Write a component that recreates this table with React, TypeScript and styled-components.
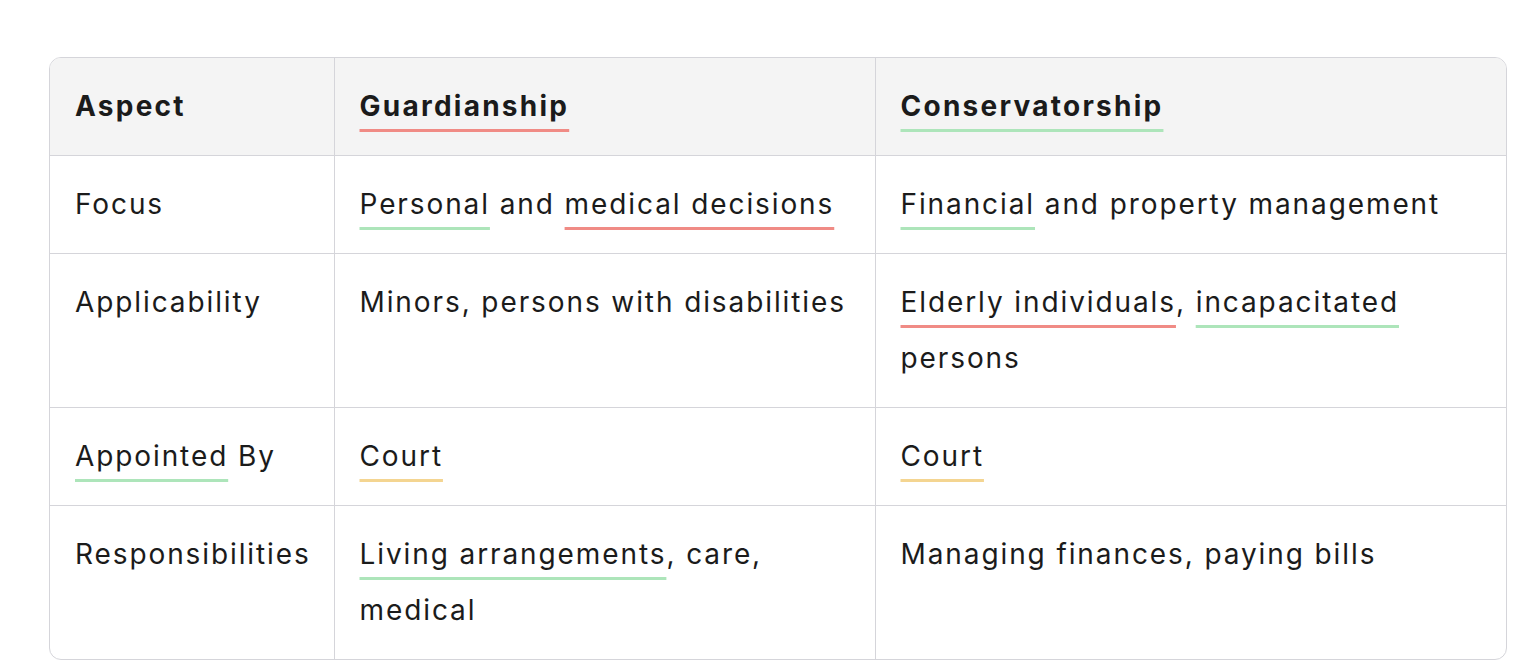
import React from "react";
import styled, { createGlobalStyle } from "styled-components";

const Global = createGlobalStyle`
  html, body { margin: 0; padding: 0; background: #ffffff; }
  body { font-family: Inter, "Noto Sans", sans-serif; color: #1b1b1b; }
`;

const Page = styled.div`
  padding: 57px 13px 0 49px;
`;

const Frame = styled.div`
  width: 1458px;
  box-sizing: border-box;
  border: 1px solid #d5d5da;
  border-radius: 12px;
  overflow: hidden;
`;

const Table = styled.table`
  width: 100%;
  border-collapse: collapse;
  table-layout: fixed;
  font-size: 28px;
  line-height: 56px;
`;

const Th = styled.th<{ $w?: number }>`
  box-sizing: border-box;
  background: #f4f4f4;
  text-align: left;
  font-weight: 700;
  letter-spacing: 2.25px;
  padding: 20px 16px 21px 25px;
  border-left: 1px solid #d5d5da;
  border-bottom: 1px solid #d5d5da;
  vertical-align: top;
  ${(p) => (p.$w ? `width: ${p.$w}px;` : "")}
  &:first-child { border-left: none; }
`;

const Td = styled.td`
  box-sizing: border-box;
  letter-spacing: 1.9px;
  padding: 20px 16px 21px 25px;
  border-left: 1px solid #d5d5da;
  border-top: 1px solid #d5d5da;
  vertical-align: top;
  &:first-child { border-left: none; }
`;

const Tr = styled.tr`
  &:first-child td { border-top: none; }
`;

const colors = {
  red: "#f08b85",
  green: "#ade5ba",
  yellow: "#f4d591",
};

const Mark = styled.span<{ $c: keyof typeof colors }>`
  text-decoration: underline;
  text-decoration-color: ${(p) => colors[p.$c]};
  text-decoration-thickness: 3px;
  text-underline-offset: 13px;
`;

export default function App() {
  return (
    <>
      <Global />
      <Page>
        <Frame>
          <Table>
            <thead>
              <tr>
                <Th $w={284}>Aspect</Th>
                <Th $w={541}>
                  <Mark $c="red">Guardianship</Mark>
                </Th>
                <Th>
                  <Mark $c="green">Conservatorship</Mark>
                </Th>
              </tr>
            </thead>
            <tbody>
              <Tr>
                <Td>Focus</Td>
                <Td>
                  <Mark $c="green">Personal</Mark> and{" "}
                  <Mark $c="red">medical decisions</Mark>
                </Td>
                <Td>
                  <Mark $c="green">Financial</Mark> and property management
                </Td>
              </Tr>
              <Tr>
                <Td>Applicability</Td>
                <Td>Minors, persons with disabilities</Td>
                <Td>
                  <Mark $c="red">Elderly individuals</Mark>,{" "}
                  <Mark $c="green">incapacitated</Mark> persons
                </Td>
              </Tr>
              <Tr>
                <Td>
                  <Mark $c="green">Appointed</Mark> By
                </Td>
                <Td>
                  <Mark $c="yellow">Court</Mark>
                </Td>
                <Td>
                  <Mark $c="yellow">Court</Mark>
                </Td>
              </Tr>
              <Tr>
                <Td>Responsibilities</Td>
                <Td>
                  <Mark $c="green">Living arrangements</Mark>, care, medical
                </Td>
                <Td>Managing finances, paying bills</Td>
              </Tr>
            </tbody>
          </Table>
        </Frame>
      </Page>
    </>
  );
}
